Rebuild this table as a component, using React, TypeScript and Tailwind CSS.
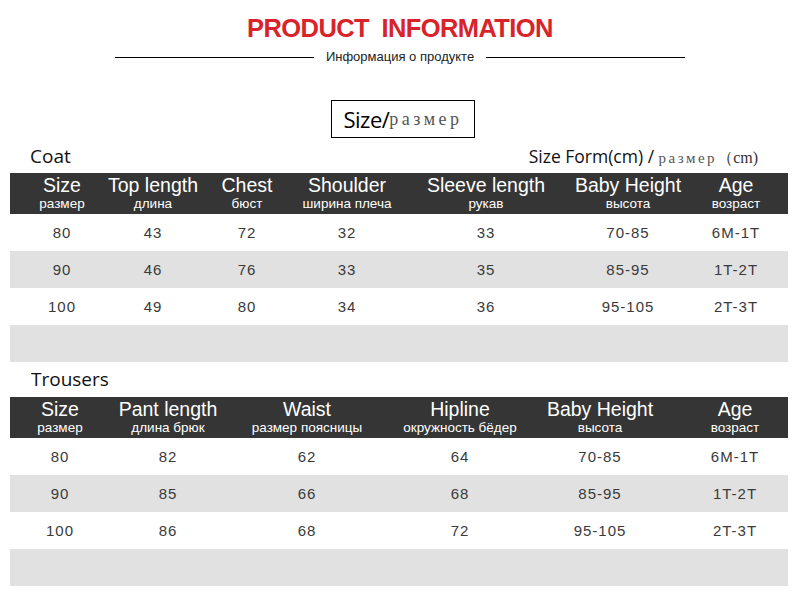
import React from "react";

type Col = { en: string; ru: string };

const coatCols: Col[] = [
  { en: "Size", ru: "размер" },
  { en: "Top length", ru: "длина" },
  { en: "Chest", ru: "бюст" },
  { en: "Shoulder", ru: "ширина плеча" },
  { en: "Sleeve length", ru: "рукав" },
  { en: "Baby Height", ru: "высота" },
  { en: "Age", ru: "возраст" },
];

const coatRows = [
  ["80", "43", "72", "32", "33", "70-85", "6M-1T"],
  ["90", "46", "76", "33", "35", "85-95", "1T-2T"],
  ["100", "49", "80", "34", "36", "95-105", "2T-3T"],
];

const trouserCols: Col[] = [
  { en: "Size", ru: "размер" },
  { en: "Pant length", ru: "длина брюк" },
  { en: "Waist", ru: "размер поясницы" },
  { en: "Hipline", ru: "окружность бёдер" },
  { en: "Baby Height", ru: "высота" },
  { en: "Age", ru: "возраст" },
];

const trouserRows = [
  ["80", "82", "62", "64", "70-85", "6M-1T"],
  ["90", "85", "66", "68", "85-95", "1T-2T"],
  ["100", "86", "68", "72", "95-105", "2T-3T"],
];

function SizeTable({
  cols,
  rows,
  grid,
  pads,
}: {
  cols: Col[];
  rows: string[][];
  grid: string;
  pads: string[];
}) {
  return (
    <div className="mx-[10px] w-[778px]">
      <div className={`grid h-[41px] bg-[#353535] ${grid}`}>
        {cols.map((c, j) => (
          <div
            key={c.en + c.ru}
            className={`flex flex-col items-center justify-center whitespace-nowrap text-white ${pads[j]}`}
          >
            <span className="text-[19.5px] leading-[19px]">{c.en}</span>
            <span className="mt-[2px] text-[13.5px] leading-[14px]">{c.ru}</span>
          </div>
        ))}
      </div>
      {rows.map((r, i) => (
        <div
          key={r[0]}
          className={`grid h-[37px] items-center pt-[2px] ${grid} ${
            i % 2 === 1 ? "bg-[#e1e1e1]" : "bg-white"
          }`}
        >
          {r.map((v, j) => (
            <div
              key={j}
              className={`text-center text-[15px] tracking-[1px] text-[#3a3a3a] whitespace-nowrap ${pads[j]}`}
            >
              {v}
            </div>
          ))}
        </div>
      ))}
      <div className="h-[37px] bg-[#e1e1e1]"></div>
    </div>
  );
}

export default function App() {
  return (
    <div className="h-[609px] w-[800px] overflow-hidden bg-white font-['Liberation_Sans',sans-serif] text-[#222]">
      <div className="pt-[12px] text-center">
        <h1 className="text-[25.5px] font-bold leading-[32px] tracking-[-0.6px] text-[#d9232b] [word-spacing:6px]">
          PRODUCT INFORMATION
        </h1>
      </div>
      <div className="mt-[5px] flex h-[16px] items-center justify-center">
        <div className="h-px w-[199px] bg-black"></div>
        <span className="mx-[12px] text-[13px] text-[#222]">
          Информация о продукте
        </span>
        <div className="h-px w-[199px] bg-black"></div>
      </div>

      <div className="mt-[35px] flex justify-center pl-[6px]">
        <div className="flex h-[38px] w-[144px] items-center justify-center border border-black">
          <span className="font-['Open_Sans',sans-serif] text-[22px] leading-none tracking-[-0.5px] text-black">
            Size/
          </span>
          <span className="font-['Liberation_Serif',serif] text-[18px] leading-none tracking-[3.5px] text-[#555]">
            размер
          </span>
        </div>
      </div>

      <div className="flex h-[35px] items-end justify-between pl-[30px] pr-[42px]">
        <span className="pb-[5px] font-['Open_Sans',sans-serif] text-[19px] leading-[24px] text-[#111]">
          Coat
        </span>
        <span className="pb-[4px] leading-[22px] text-[#111]">
          <span className="font-['Open_Sans',sans-serif] text-[17.5px]">
            Size Form(cm) /{" "}
          </span>
          <span className="font-['Liberation_Serif',serif] text-[15px] tracking-[2.5px] text-[#555]">
            размер
          </span>
          <span className="font-['Liberation_Serif',serif] text-[16px] text-[#333]">
            （cm)
          </span>
        </span>
      </div>

      <SizeTable
        cols={coatCols}
        rows={coatRows}
        grid="grid-cols-[104px_78px_110px_90px_188px_104px_104px]"
        pads={["", "", "", "", "", "pr-[8px]", ""]}
      />

      <div className="flex h-[35px] items-end pl-[31px]">
        <span className="pb-[6px] font-['Open_Sans',sans-serif] text-[19px] leading-[24px] text-[#111]">
          Trousers
        </span>
      </div>

      <SizeTable
        cols={trouserCols}
        rows={trouserRows}
        grid="grid-cols-[100px_116px_162px_144px_136px_120px]"
        pads={["", "", "", "", "", "pl-[14px]"]}
      />
    </div>
  );
}
